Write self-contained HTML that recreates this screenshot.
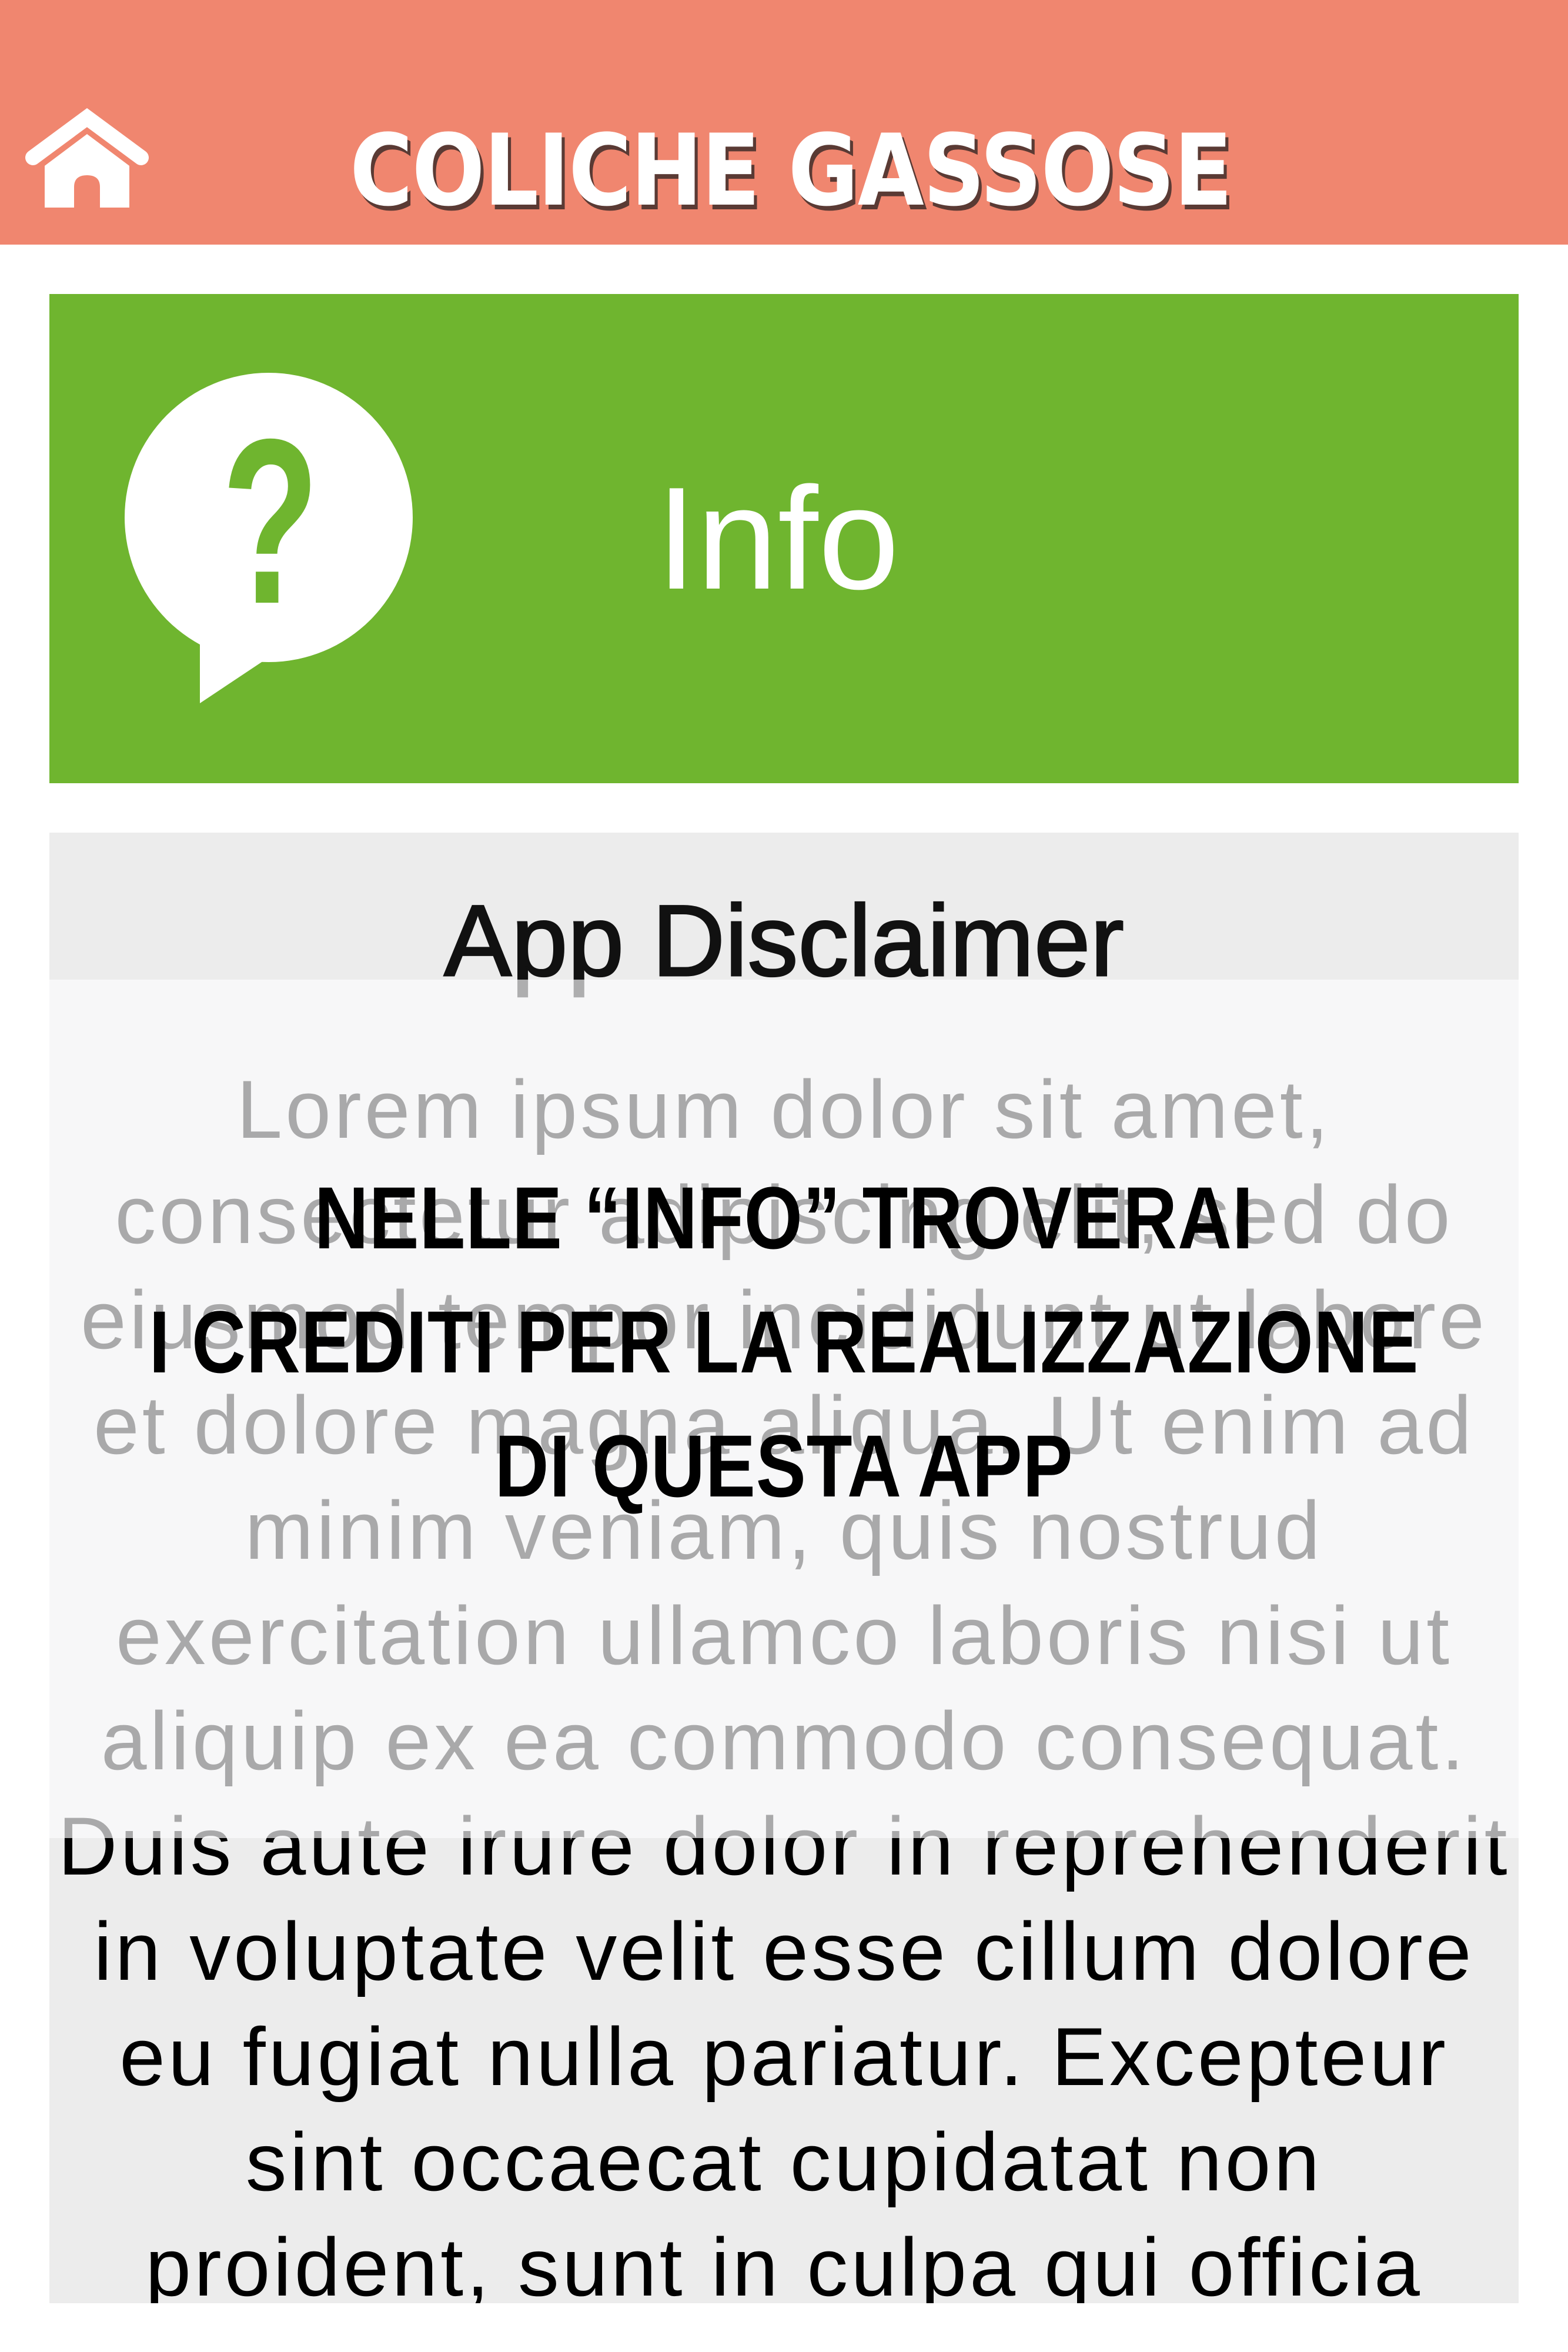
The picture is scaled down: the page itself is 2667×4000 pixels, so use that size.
<!DOCTYPE html>
<html><head><meta charset="utf-8"><style>
*{margin:0;padding:0;box-sizing:border-box}
html,body{width:2667px;height:4000px;background:#fff;overflow:hidden}
body{position:relative;font-family:"Liberation Sans",sans-serif}
#hdr{position:absolute;left:0;top:0;width:2667px;height:416px;background:#F0866F}
#title{position:absolute;left:595px;top:190px;white-space:nowrap;font-family:"DejaVu Sans","Liberation Sans",sans-serif;font-weight:bold;font-size:168px;line-height:200px;color:#fff;text-shadow:6px 8px 0 #5a3a34;transform-origin:0 0;transform:scaleX(0.87);letter-spacing:-2px}
#green{position:absolute;left:84px;top:500px;width:2499px;height:832px;background:#6FB52F}
#info{position:absolute;left:1032px;top:265px;font-size:248px;line-height:300px;color:#fff}
#panel{position:absolute;left:84px;top:1416px;width:2499px;height:2501px;background:#ECECEC;overflow:hidden}
#app{position:absolute;left:0;width:100%;top:84px;text-align:center;font-size:172px;line-height:200px;color:#111;-webkit-text-stroke:3px #111}
#lorem{position:absolute;left:0;width:100%;top:381px;text-align:center;font-size:140px;line-height:179px;color:#000;white-space:nowrap;letter-spacing:5px}
#ov{position:absolute;left:0;top:250px;width:100%;height:1460px;background:rgba(252,252,254,0.67)}
#head{position:absolute;left:0;top:1966px;width:2667px;text-align:center;font-family:"Liberation Sans",sans-serif;font-weight:bold;font-size:150px;line-height:211px;color:#000;white-space:nowrap;letter-spacing:1px;transform:scaleX(0.85);transform-origin:1333px 0}
</style></head><body>
<div id="hdr">
<svg width="300" height="416" style="position:absolute;left:0;top:0">
<polyline points="56,268 148,200 240,268" fill="none" stroke="#fff" stroke-width="26" stroke-linejoin="miter" stroke-linecap="round"/>
<path d="M76,282 L148,228 L220,282 L220,353 L170,353 L170,318 Q170,298 148,298 Q126,298 126,318 L126,353 L76,353 Z" fill="#fff"/>
</svg>
<div id="title">COLICHE GASSOSE</div>
</div>
<div id="green">
<svg width="800" height="832" style="position:absolute;left:0;top:0">
<ellipse cx="373" cy="380" rx="245" ry="246" fill="#fff"/>
<path d="M256,520 L256,696 L400,600 Z" fill="#fff"/>
<g transform="translate(376,0) scale(0.68,1) translate(-376,0)">
<text x="376" y="525" text-anchor="middle" font-family="Liberation Sans,sans-serif" font-weight="bold" font-size="400" fill="#6FB52F">?</text>
</g>
</svg>
<div id="info">Info</div>
</div>
<div id="panel">
<div id="app">App Disclaimer</div>
<div id="lorem">Lorem ipsum dolor sit amet,<br>consectetur adipiscing elit, sed do<br>eiusmod tempor incididunt ut labore<br>et dolore magna aliqua. Ut enim ad<br>minim veniam, quis nostrud<br>exercitation ullamco laboris nisi ut<br>aliquip ex ea commodo consequat.<br>Duis aute irure dolor in reprehenderit<br>in voluptate velit esse cillum dolore<br>eu fugiat nulla pariatur. Excepteur<br>sint occaecat cupidatat non<br>proident, sunt in culpa qui officia<br>deserunt mollit anim id est laborum.</div>
<div id="ov"></div>
</div>
<div id="head">NELLE “INFO” TROVERAI<br>I CREDITI PER LA REALIZZAZIONE<br>DI QUESTA APP</div>
</body></html>
